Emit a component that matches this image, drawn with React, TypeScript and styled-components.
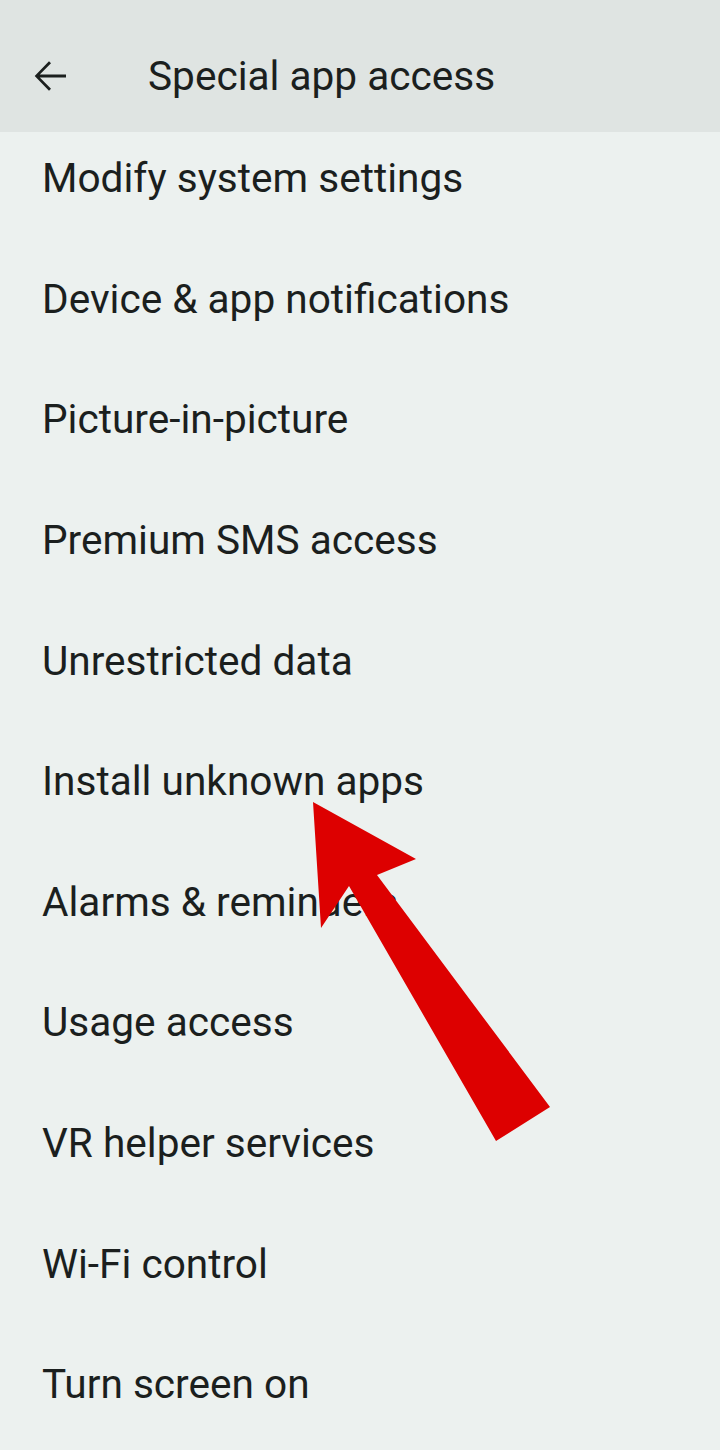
import styled, { createGlobalStyle } from 'styled-components';

const GlobalStyle = createGlobalStyle`
  * {
    margin: 0;
    padding: 0;
    box-sizing: border-box;
  }

  body {
    font-family: Roboto, 'Noto Sans', sans-serif;
    background: #ecf1ef;
    color: #1b1f1e;
    -webkit-font-smoothing: antialiased;
  }
`;

const Screen = styled.div`
  position: relative;
  width: 720px;
  height: 1450px;
  overflow: hidden;
  background: #ecf1ef;
`;

const TopBar = styled.header`
  position: relative;
  z-index: 2;
  display: flex;
  align-items: center;
  height: 132px;
  padding: 20px 0 0 26px;
  background: #dfe4e2;
`;

const BackButton = styled.button`
  display: flex;
  align-items: center;
  justify-content: center;
  width: 48px;
  height: 48px;
  border: none;
  background: none;
  color: #1b1f1e;
`;

const Title = styled.h1`
  margin-left: 74px;
  font-size: 40.6px;
  font-weight: 400;
  color: #1b1f1e;
`;

const List = styled.ul`
  list-style: none;
  margin-top: -14px;
`;

const Row = styled.li`
  display: flex;
  align-items: center;
  height: 120.6px;
  padding-left: 42px;
  font-size: 40.6px;
  color: #1b1f1e;
`;

// red annotation arrow drawn over the list
const Pointer = styled.svg`
  position: absolute;
  left: 0;
  top: 0;
  z-index: 3;
  pointer-events: none;
`;

const items = [
  'Modify system settings',
  'Device & app notifications',
  'Picture-in-picture',
  'Premium SMS access',
  'Unrestricted data',
  'Install unknown apps',
  'Alarms & reminders',
  'Usage access',
  'VR helper services',
  'Wi-Fi control',
  'Turn screen on',
];

function App() {
  return (
    <>
      <GlobalStyle />
      <Screen>
        <TopBar>
          <BackButton aria-label="Back">
            <svg width="48" height="48" viewBox="0 0 24 24" fill="currentColor">
              <path d="M20 11.25H6.9l5.6-5.6-1-1L4.35 12l7.15 7.35 1-1-5.6-5.6H20z" />
            </svg>
          </BackButton>
          <Title>Special app access</Title>
        </TopBar>

        <List>
          {items.map((label) => (
            <Row key={label}>{label}</Row>
          ))}
        </List>

        <Pointer width="720" height="1450" viewBox="0 0 720 1450">
          <polygon
            points="313,802 416,859 377,875 550,1107 496,1141 349,886 321,928"
            fill="#dd0000"
          />
        </Pointer>
      </Screen>
    </>
  );
}

export default App;
